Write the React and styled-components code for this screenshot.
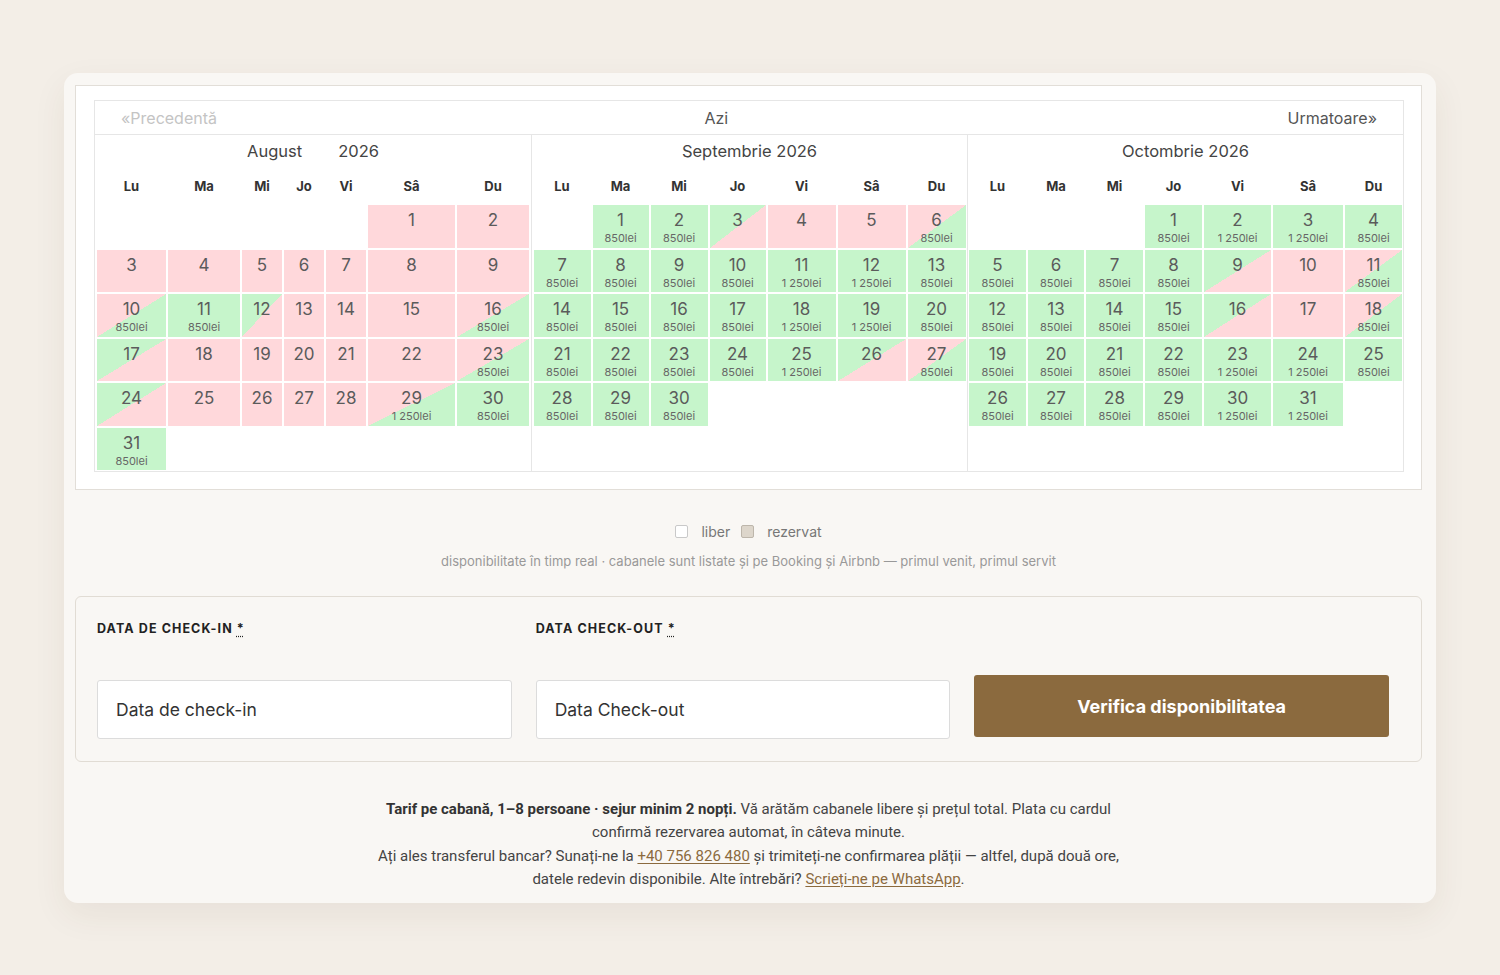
import React from 'react';
import styled, { createGlobalStyle, css } from 'styled-components';

const GlobalStyle = createGlobalStyle`
  body {
    margin: 0;
    background: #f3eee7;
    font-family: 'Inter', 'Noto Sans', sans-serif;
    color: #333;
  }
`;

const PINK = '#ffd8db';
const GREEN = '#c6f5cb';

const Page = styled.div`
  padding: 73px 0 60px;
`;

const Card = styled.div`
  width: 1372px;
  margin: 0 auto;
  box-sizing: border-box;
  padding: 12px 14px 12px 11px;
  background: #f9f7f4;
  border-radius: 14px;
  box-shadow: 0 12px 34px rgba(80, 60, 30, 0.07);
`;

const CalendarPanel = styled.div`
  background: #fff;
  border: 1px solid #e2ded8;
  padding: 14px 17px 17px 18px;
`;

const Calendar = styled.div`
  border: 1px solid #e6e6e6;
`;

const NavBar = styled.div`
  display: flex;
  align-items: center;
  justify-content: space-between;
  height: 33px;
  padding: 0 26px;
  border-bottom: 1px solid #e6e6e6;
  font-size: 16px;
`;

const NavLink = styled.span`
  color: ${(p) => (p.$muted ? '#c4c4c4' : '#555')};
  ${(p) => p.$center && css`margin-right: 72px;`}
`;

const Months = styled.div`
  display: grid;
  grid-template-columns: 436px 436px 1fr;
`;

const Month = styled.div`
  display: flex;
  flex-direction: column;
  align-items: center;
  padding-bottom: 1px;
  ${(p) => p.$divider && css`border-left: 1px solid #e6e6e6;`}
`;

const MonthTitle = styled.div`
  height: 33px;
  line-height: 33px;
  font-size: 16.5px;
  color: #444;
  display: flex;
  gap: 36px;
`;

const DayGrid = styled.div`
  display: grid;
  grid-template-columns: ${(p) => p.$cols};
  grid-template-rows: 35px repeat(6, 42.5px);
  gap: 2px;
`;

const Weekday = styled.div`
  display: flex;
  align-items: center;
  justify-content: center;
  font-size: 13px;
  font-weight: 700;
  color: #333;
`;

const cellBg = {
  b: PINK,
  f: GREEN,
  o: `linear-gradient(to bottom right, ${PINK} 50%, ${GREEN} 50%)`,
  i: `linear-gradient(to bottom right, ${GREEN} 50%, ${PINK} 50%)`,
};

const DayCell = styled.div`
  box-sizing: border-box;
  padding-top: 5px;
  text-align: center;
  background: ${(p) => cellBg[p.$status] || 'transparent'};
  color: #5b5b5b;
`;

const DayNum = styled.div`
  font-size: 17px;
  line-height: 20px;
`;

const Price = styled.div`
  margin-top: 1px;
  font-size: 11px;
  line-height: 14px;
  color: #666;
`;

const Legend = styled.div`
  display: flex;
  justify-content: center;
  align-items: center;
  margin-top: 31px;
  height: 20px;
  font-size: 14px;
  color: #777;
`;

const LegendBox = styled.span`
  width: 11px;
  height: 11px;
  border: 1px solid ${(p) => (p.$filled ? '#bdb6ab' : '#c9c9c9')};
  border-radius: 2px;
  background: ${(p) => (p.$filled ? '#ddd6cb' : '#fff')};
  margin: 0 13px 0 ${(p) => (p.$filled ? '11px' : '0')};
`;

const Note = styled.div`
  margin-top: 10px;
  line-height: 20px;
  text-align: center;
  font-size: 13px;
  color: #999;
`;

const FormPanel = styled.div`
  margin-top: 25px;
  display: flex;
  align-items: flex-end;
  gap: 24px;
  padding: 22px 32px 22px 21px;
  border: 1px solid #e1dcd4;
  border-radius: 6px;
`;

const Field = styled.div`
  width: 415px;
  display: flex;
  flex-direction: column;
`;

const Label = styled.label`
  font-size: 12.5px;
  line-height: 20px;
  font-weight: 700;
  letter-spacing: 1.1px;
  color: #222;
  margin-bottom: 41px;
`;

const Req = styled.abbr`
  text-decoration: underline dotted;
  text-underline-offset: 3px;
  cursor: help;
`;

const Input = styled.input`
  box-sizing: border-box;
  width: 100%;
  height: 59px;
  padding: 0 18px;
  border: 1px solid #dcdcdc;
  border-radius: 3px;
  background: #fff;
  font-family: 'Inter', sans-serif;
  font-size: 17.5px;
  color: #333;
  outline: none;

  &::placeholder {
    color: #333;
  }
`;

const SubmitButton = styled.button`
  width: 415px;
  height: 62px;
  margin-bottom: 2px;
  border: none;
  border-radius: 3px;
  background: #8b6a3e;
  color: #fff;
  font-family: 'Inter', sans-serif;
  font-size: 18px;
  font-weight: 700;
  cursor: pointer;
`;

const Info = styled.p`
  margin: 36px 0 0;
  text-align: center;
  font-family: 'Roboto', sans-serif;
  font-size: 15px;
  line-height: 23.3px;
  color: #444;

  strong {
    font-weight: 700;
    color: #333;
  }
`;

const Link = styled.a`
  color: #8b6a3e;
  text-decoration: underline;
  text-underline-offset: 2px;
`;

const WEEKDAYS = ['Lu', 'Ma', 'Mi', 'Jo', 'Vi', 'Sâ', 'Du'];

// b = rezervat, f = liber, o = plecare (rezervat -> liber), i = sosire (liber -> rezervat)
const months = [
  {
    name: 'August',
    year: 2026,
    split: true,
    offset: 5,
    cols: '69px 72px 40px 40px 40px 87px 72px',
    days: 'bbbbbbbbbofibbboibbbbboibbbboff',
    high: [29],
  },
  {
    name: 'Septembrie',
    year: 2026,
    offset: 1,
    cols: '57px 56px 57px 56px 68px 68px 58px',
    days: 'ffibbo' + 'f'.repeat(19) + 'ioff' + 'f',
    high: [11, 12, 18, 19, 25],
  },
  {
    name: 'Octombrie',
    year: 2026,
    offset: 3,
    cols: '57px 56px 57px 57px 67px 70px 57px',
    days: 'f'.repeat(8) + 'ibo' + 'ffff' + 'ibo' + 'f'.repeat(13),
    high: [2, 3, 23, 24, 30, 31],
  },
];

const formatPrice = (v) => (v >= 1000 ? `${Math.floor(v / 1000)}\u00a0${String(v % 1000).padStart(3, '0')}` : v) + 'lei';

const MonthView = ({ month, divider }) => {
  const cells = [];
  for (let i = 0; i < month.offset; i++) cells.push(<DayCell key={`e${i}`} />);
  month.days.split('').forEach((status, idx) => {
    const day = idx + 1;
    const priced = status === 'f' || status === 'o';
    const price = month.high.includes(day) ? 1250 : 850;
    cells.push(
      <DayCell key={day} $status={status}>
        <DayNum>{day}</DayNum>
        {priced && <Price>{formatPrice(price)}</Price>}
      </DayCell>
    );
  });

  return (
    <Month $divider={divider}>
      <MonthTitle>
        {month.split ? (
          <>
            <span>{month.name}</span>
            <span>{month.year}</span>
          </>
        ) : (
          <span>{`${month.name} ${month.year}`}</span>
        )}
      </MonthTitle>
      <DayGrid $cols={month.cols}>
        {WEEKDAYS.map((d) => (
          <Weekday key={d}>{d}</Weekday>
        ))}
        {cells}
      </DayGrid>
    </Month>
  );
};

export default function App() {
  return (
    <Page>
      <GlobalStyle />
      <Card>
        <CalendarPanel>
          <Calendar>
            <NavBar>
              <NavLink $muted>«Precedentă</NavLink>
              <NavLink $center>Azi</NavLink>
              <NavLink>Urmatoare»</NavLink>
            </NavBar>
            <Months>
              {months.map((m, i) => (
                <MonthView key={m.name} month={m} divider={i > 0} />
              ))}
            </Months>
          </Calendar>
        </CalendarPanel>

        <Legend>
          <LegendBox />
          liber
          <LegendBox $filled />
          rezervat
        </Legend>
        <Note>
          disponibilitate în timp real · cabanele sunt listate și pe Booking și Airbnb — primul venit, primul servit
        </Note>

        <FormPanel>
          <Field>
            <Label>
              DATA DE CHECK-IN <Req title="obligatoriu">*</Req>
            </Label>
            <Input placeholder="Data de check-in" />
          </Field>
          <Field>
            <Label>
              DATA CHECK-OUT <Req title="obligatoriu">*</Req>
            </Label>
            <Input placeholder="Data Check-out" />
          </Field>
          <SubmitButton>Verifica disponibilitatea</SubmitButton>
        </FormPanel>

        <Info>
          <strong>Tarif pe cabană, 1–8 persoane · sejur minim 2 nopți.</strong> Vă arătăm cabanele libere și
          prețul total. Plata cu cardul
          <br />
          confirmă rezervarea automat, în câteva minute.
          <br />
          Ați ales transferul bancar? Sunați-ne la <Link href="#">+40 756 826 480</Link> și trimiteți-ne
          confirmarea plății — altfel, după două ore,
          <br />
          datele redevin disponibile. Alte întrebări? <Link href="#">Scrieți-ne pe WhatsApp</Link>.
        </Info>
      </Card>
    </Page>
  );
}
